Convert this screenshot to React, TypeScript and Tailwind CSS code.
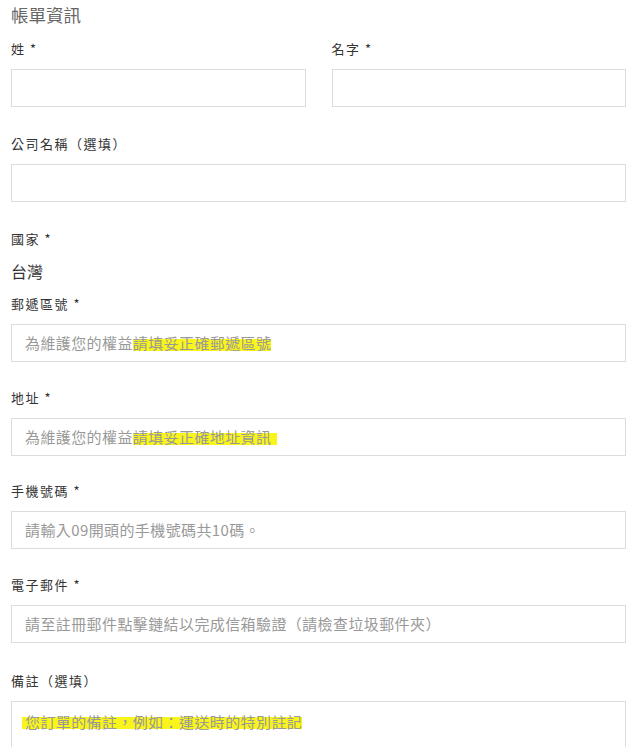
const font = { fontFamily: '"Noto Sans CJK TC", "Noto Sans", sans-serif' };

function Label({ children }: { children: React.ReactNode }) {
  return (
    <div className="text-[13px] leading-[20px] tracking-[1.5px] text-[#333] mb-[10px]">
      {children}
    </div>
  );
}

function Box({ children }: { children?: React.ReactNode }) {
  return (
    <div className="h-[38px] border border-[#dcdcdc] bg-white px-[13px] flex items-center text-[15px] tracking-[0.4px] text-[#999] whitespace-nowrap overflow-hidden">
      {children}
    </div>
  );
}

function Mark({ children, className = '' }: { children: React.ReactNode; className?: string }) {
  return (
    <span
      className={`bg-[linear-gradient(transparent_30%,#f9f51c_30%,#f9f51c_88%,transparent_88%)] ${className}`}
    >
      {children}
    </span>
  );
}

export default function App() {
  return (
    <div style={font} className="w-[637px] bg-white px-[11px] pt-[3px] pb-6">
      <h2 className="text-[17.5px] leading-[24px] text-[#666] mb-[12px]">帳單資訊</h2>

      <div className="grid grid-cols-2 gap-x-[26px] mb-[27px]">
        <div>
          <Label>姓 *</Label>
          <Box />
        </div>
        <div>
          <Label>名字 *</Label>
          <Box />
        </div>
      </div>

      <div className="mb-[27px]">
        <Label>公司名稱（選填）</Label>
        <Box />
      </div>

      <Label>國家 *</Label>
      <div className="text-[16px] leading-[24px] text-[#333] mb-[11px]">台灣</div>

      <div className="mb-[26px]">
        <Label>郵遞區號 *</Label>
        <Box>
          為維護您的權益<Mark>請填妥正確郵遞區號</Mark>
        </Box>
      </div>

      <div className="mb-[25px]">
        <Label>地址 *</Label>
        <Box>
          為維護您的權益<Mark className="pr-[6px]">請填妥正確地址資訊</Mark>
        </Box>
      </div>

      <div className="mb-[26px]">
        <Label>手機號碼 *</Label>
        <Box>請輸入09開頭的手機號碼共10碼。</Box>
      </div>

      <div className="mb-[28px]">
        <Label>電子郵件 *</Label>
        <Box>請至註冊郵件點擊鏈結以完成信箱驗證（請檢查垃圾郵件夾）</Box>
      </div>

      <div>
        <Label>備註（選填）</Label>
        <div className="h-[80px] border border-[#dcdcdc] bg-white px-[13px] pt-[9px] text-[15px] tracking-[0.4px] text-[#999] whitespace-nowrap">
          <Mark className="-ml-[3px] pl-[3px]">您訂單的備註，例如：運送時的特別註記</Mark>
        </div>
      </div>
    </div>
  );
}
